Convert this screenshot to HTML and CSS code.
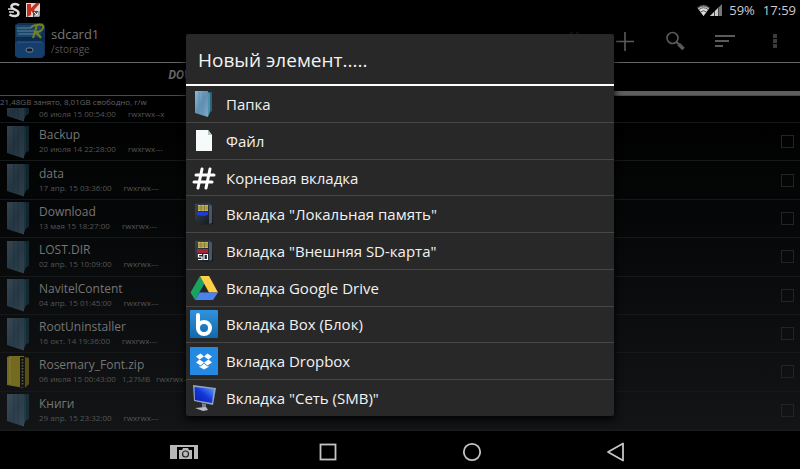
FILE: index.html
```html
<!DOCTYPE html>
<html lang="ru">
<head>
    <meta charset="UTF-8">
    <meta name="viewport" content="width=device-width, initial-scale=1.0">
    <title>sdcard1</title>
    <link rel="stylesheet" href="styles.css">
</head>
<body>
    <svg width="0" height="0" class="defs" aria-hidden="true">
        <defs>
            <linearGradient id="gFolder" x1="0" y1="0" x2="1" y2="1">
                <stop offset="0" stop-color="#8fb9d4"/>
                <stop offset="0.5" stop-color="#5f8fb2"/>
                <stop offset="1" stop-color="#7fa9c6"/>
            </linearGradient>
            <linearGradient id="gBlue" x1="0" y1="0" x2="0" y2="1">
                <stop offset="0" stop-color="#2f93dd"/>
                <stop offset="1" stop-color="#1268ac"/>
            </linearGradient>
            <linearGradient id="gScreen" x1="0" y1="1" x2="1" y2="0">
                <stop offset="0" stop-color="#0a1cb4"/>
                <stop offset="0.5" stop-color="#1237d8"/>
                <stop offset="1" stop-color="#63a0ff"/>
            </linearGradient>
            <linearGradient id="gCard" x1="0" y1="0" x2="1" y2="1">
                <stop offset="0" stop-color="#3c4a58"/>
                <stop offset="1" stop-color="#0d1218"/>
            </linearGradient>
            <symbol id="folder" viewBox="0 0 22 34">
                <path d="M14 1h8v25l-4 2z" fill="#2d6278"/>
                <path d="M0 1h17v32.500L0 28z" fill="url(#gFolder)"/>
                <path d="M7 1v28M11 1v29" stroke="#557f9e" stroke-width="1"/>
                <path d="M17 1l2 2v24l-2 5z" fill="#3f86a0"/>
            </symbol>
            <symbol id="zip" viewBox="0 0 22 34">
                <path d="M14 1l8 2v26l-4 4z" fill="#a08a20"/>
                <path d="M0 2l3-1h14v32L0 30z" fill="#d9c42c"/>
                <path d="M3 1v28" stroke="#f0e37a"/>
                <path d="M13 2h5v31l-5-1z" fill="#1c1a10"/>
                <path d="M15.500 4v27" stroke="#b8b490" stroke-width="1.500" stroke-dasharray="1.500 1.500"/>
            </symbol>
        </defs>
    </svg>

    <div class="statusbar">
        <svg class="status-icon" width="14" height="16" viewBox="0 0 14 16">
            <path d="M12 3.500C9 1 4 2 4.500 5s7 2.500 7 6-5.500 4-9 1.500" fill="none" stroke="#ddd" stroke-width="2.500"/>
            <path d="M1 7h6M7 10H2" stroke="#ddd" stroke-width="1.500"/>
        </svg>
        <svg class="status-icon" width="15" height="15" viewBox="0 0 15 15">
            <path d="M0 0h14v14H0z" fill="#ddd8d4"/>
            <path d="M1 1h4v4l5-5h4L8 7l3 3-3 1-3-3v4l-4 2z" fill="#c6301f"/>
            <path d="M7 8h7v6H7z" fill="#4a4a4a"/>
            <path d="M8 9l3 3M11.500 9.500V12H9M13 8v5H8" stroke="#eee" fill="none"/>
        </svg>
        <span class="spacer"></span>
        <svg width="26" height="13" viewBox="0 0 26 13">
            <path d="M0 3.500Q6.500-2 13 3.500L6.500 12z" fill="#555"/>
            <path d="M1 4.500Q6.500.500 12 4.500L6.500 12z" fill="#ddd"/>
            <path d="M2 5.500Q6.500 2 11 5.500M3.500 8Q6.500 5.500 9.500 8" stroke="#555" fill="none"/>
            <path d="M13 12L25 0v12z" fill="#777"/>
            <path d="M13 12L21 4v8z" fill="#ccc"/>
            <path d="M17.500 7v5M21.500 3v9" stroke="#444"/>
        </svg>
        <span class="battery">59%</span>
        <span class="clock">17:59</span>
    </div>

    <div class="appbar">
        <svg class="app-icon" width="31" height="36" viewBox="0 0 31 36">
            <path d="M1 2l3-2h25l2 3v29l-3 3H4l-3-3z" fill="#0f3156"/>
            <path d="M2 2h25v12H2z" fill="#174468"/>
            <path d="M3 5h14M3 8h17M4 11h20" stroke="#4a6d88" stroke-width="1.500"/>
            <path d="M1 14h29v5H1z" fill="#0c2b50"/>
            <path d="M1 19h29v14l-3 2H4l-3-2z" fill="#153e6a"/>
            <path d="M3 19h25" stroke="#2f6290"/>
            <rect x="12" y="25" width="7" height="4" rx="2" fill="#0a1a2c" stroke="#6e8494"/>
            <path d="M19 15l4-13c4-1 7 0 6 3s-4 4-7 4l5 6M17 5c1-3 4-3 7-3" fill="none" stroke="#79821d" stroke-width="2"/>
        </svg>
        <div class="title">
            <h1>sdcard1</h1>
            <p>/storage</p>
        </div>
        <div class="actions">
            <button aria-label="Выделить">
                <svg width="24" height="24" viewBox="0 0 24 24"><path d="M7 4h3M13 4h3" stroke="#222" stroke-width="1"/></svg>
            </button>
            <button aria-label="Добавить">
                <svg width="24" height="24" viewBox="0 0 24 24"><path d="M12 3v19M3 12.500h18" stroke="#5b5b5b" stroke-width="1.600"/></svg>
            </button>
            <button aria-label="Поиск">
                <svg width="24" height="24" viewBox="0 0 24 24">
                    <circle cx="9.500" cy="9" r="5.500" fill="none" stroke="#5b5b5b" stroke-width="1.600"/>
                    <path d="M13.500 13l2 2" stroke="#5b5b5b" stroke-width="2"/>
                    <path d="M15.500 15l5 5" stroke="#5b5b5b" stroke-width="3.600"/>
                </svg>
            </button>
            <button aria-label="Сортировка">
                <svg width="24" height="24" viewBox="0 0 24 24"><path d="M2 7h20M2 12h14M2 17h8" stroke="#5b5b5b" stroke-width="2"/></svg>
            </button>
            <button aria-label="Меню">
                <svg width="24" height="24" viewBox="0 0 24 24"><path d="M10 5h4v4h-4zM10 10h4v4h-4zM10 15h4v4h-4z" fill="#3c3c3c"/></svg>
            </button>
        </div>
    </div>

    <nav class="tabs">
        <a href="#download">DOWNLOAD</a>
        <a href="#sdcard1" class="active" aria-label="sdcard1"></a>
    </nav>

    <p class="usage">21,48GB занято, 8,01GB свободно, r/w</p>

    <ul class="files">
        <li class="cut">
            <svg class="file-icon"><use href="#folder"/></svg>
            <div class="info">
                <span class="meta"><span>06 июля 15 00:54:00</span><span>rwxrwx--x</span></span>
            </div>
        </li>
        <li>
            <svg class="file-icon"><use href="#folder"/></svg>
            <div class="info">
                <label class="name" for="f1">Backup</label>
                <span class="meta"><span>20 июля 14 22:28:00</span><span>rwxrwx---</span></span>
            </div>
            <input type="checkbox" id="f1">
        </li>
        <li>
            <svg class="file-icon"><use href="#folder"/></svg>
            <div class="info">
                <label class="name" for="f2">data</label>
                <span class="meta"><span>17 апр. 15 03:36:00</span><span>rwxrwx---</span></span>
            </div>
            <input type="checkbox" id="f2">
        </li>
        <li>
            <svg class="file-icon"><use href="#folder"/></svg>
            <div class="info">
                <label class="name" for="f3">Download</label>
                <span class="meta"><span>13 мая 15 18:27:00</span><span>rwxrwx---</span></span>
            </div>
            <input type="checkbox" id="f3">
        </li>
        <li>
            <svg class="file-icon"><use href="#folder"/></svg>
            <div class="info">
                <label class="name" for="f4">LOST.DIR</label>
                <span class="meta"><span>02 апр. 15 10:09:00</span><span>rwxrwx---</span></span>
            </div>
            <input type="checkbox" id="f4">
        </li>
        <li>
            <svg class="file-icon"><use href="#folder"/></svg>
            <div class="info">
                <label class="name" for="f5">NavitelContent</label>
                <span class="meta"><span>04 апр. 15 01:45:00</span><span>rwxrwx---</span></span>
            </div>
            <input type="checkbox" id="f5">
        </li>
        <li>
            <svg class="file-icon"><use href="#folder"/></svg>
            <div class="info">
                <label class="name" for="f6">RootUninstaller</label>
                <span class="meta"><span>16 окт. 14 19:36:00</span><span>rwxrwx---</span></span>
            </div>
            <input type="checkbox" id="f6">
        </li>
        <li>
            <svg class="file-icon zip"><use href="#zip"/></svg>
            <div class="info">
                <label class="name" for="f7">Rosemary_Font.zip</label>
                <span class="meta tight"><span>06 июля 15 00:43:00</span><span>1,27MB</span><span>rwxrwx---</span></span>
            </div>
            <input type="checkbox" id="f7">
        </li>
        <li>
            <svg class="file-icon"><use href="#folder"/></svg>
            <div class="info">
                <label class="name" for="f8">Книги</label>
                <span class="meta"><span>29 апр. 15 23:32:00</span><span>rwxrwx---</span></span>
            </div>
            <input type="checkbox" id="f8">
        </li>
    </ul>

    <div class="navbar">
        <button aria-label="Снимок экрана">
            <svg width="28" height="16" viewBox="0 0 28 16">
                <path d="M0 1h28v14h-4V3H7v12H0z" fill="#b8b8b8"/>
                <path d="M9 6h3l1-2h5l1 2h3v9H9z" fill="#b8b8b8"/>
                <circle cx="15.500" cy="10" r="3" fill="none" stroke="#222" stroke-width="1.200"/>
            </svg>
        </button>
        <button aria-label="Недавние">
            <svg width="20" height="20" viewBox="0 0 20 20"><rect x="2.500" y="2.500" width="15" height="15" fill="none" stroke="#c4c4c4" stroke-width="1.800"/></svg>
        </button>
        <button aria-label="Домой">
            <svg width="20" height="20" viewBox="0 0 20 20"><circle cx="10" cy="10" r="8.200" fill="none" stroke="#c4c4c4" stroke-width="1.800"/></svg>
        </button>
        <button aria-label="Назад">
            <svg width="20" height="20" viewBox="0 0 20 20"><path d="M17 1.500v17L2 10z" fill="none" stroke="#c4c4c4" stroke-width="1.800" stroke-linejoin="round"/></svg>
        </button>
    </div>

    <div class="overlay">
        <div class="dialog" role="dialog" aria-labelledby="dialogTitle">
            <h2 id="dialogTitle">Новый элемент.....</h2>
            <div class="options">
                <button>
                    <svg width="28" height="28" viewBox="0 0 28 28">
                        <path d="M16 2h6v19l-4 2z" fill="#2d6278"/>
                        <path d="M5 1h13v26L5 23z" fill="url(#gFolder)"/>
                        <path d="M9 2v22M13 2v23" stroke="#5f8fb2"/>
                        <path d="M18 2l2 2v18l-2 5z" fill="#4a92ad"/>
                    </svg>
                    Папка
                </button>
                <button>
                    <svg width="28" height="28" viewBox="0 0 28 28">
                        <path d="M6 3h12l4 5v16H6z" fill="#f5fafa"/>
                        <path d="M18 3v5h4z" fill="#b9c4c8"/>
                    </svg>
                    Файл
                </button>
                <button>
                    <svg width="28" height="28" viewBox="0 0 28 28">
                        <path d="M12 5l-4 19M20 5l-4 19M6 11h18M4 18h18" stroke="#fff" stroke-width="3" stroke-linecap="round"/>
                    </svg>
                    Корневая вкладка
                </button>
                <button>
                    <svg width="28" height="28" viewBox="0 0 28 28">
                        <path d="M5 4l15-1 3 3v18l-12 1-6-5z" fill="url(#gCard)"/>
                        <path d="M19 4l3 2v17l-3 1z" fill="#4b5661"/>
                        <path d="M8 5h10v6H8z" fill="#c9bb55"/>
                        <path d="M8 7h10M8 9h10M11 5v6M14.500 5v6" stroke="#807432" stroke-width=".8"/>
                        <path d="M7 12h11v3l-4 1-7-1z" fill="#1f3be0"/>
                    </svg>
                    Вкладка "Локальная память"
                </button>
                <button>
                    <svg width="28" height="28" viewBox="0 0 28 28">
                        <path d="M5 4l15-1 3 3v18l-12 1-6-5z" fill="url(#gCard)"/>
                        <path d="M19 4l3 2v17l-3 1z" fill="#4b5661"/>
                        <path d="M8 5h10v6H8z" fill="#c9bb55"/>
                        <path d="M8 7h10M8 9h10M11 5v6M14.500 5v6" stroke="#807432" stroke-width=".8"/>
                        <path d="M7 12h11v4H7z" fill="#a32634"/>
                        <path d="M12 17.500H8.500v2.500H12v2.500H8M14 17.500h3.500v5H14z" fill="none" stroke="#fff" stroke-width="1.200"/>
                    </svg>
                    Вкладка "Внешняя SD-карта"
                </button>
                <button>
                    <svg width="28" height="28" viewBox="0 0 28 28">
                        <path d="M10 2L0.500 18.500l4.500 7.500 9.500-16.500z" fill="#1aa260"/>
                        <path d="M10 2h9l9 16.500h-9z" fill="#ffcf48"/>
                        <path d="M9.500 18.500H28L23 26H5z" fill="#4a83ee"/>
                    </svg>
                    Вкладка Google Drive
                </button>
                <button>
                    <svg width="28" height="28" viewBox="0 0 28 28">
                        <rect width="28" height="28" rx="1" fill="url(#gBlue)"/>
                        <path d="M8 5v13" stroke="#fff" stroke-width="4" stroke-linecap="round"/>
                        <circle cx="14" cy="18" r="6" fill="none" stroke="#fff" stroke-width="4"/>
                    </svg>
                    Вкладка Box (Блок)
                </button>
                <button>
                    <svg width="28" height="28" viewBox="0 0 28 28">
                        <rect width="28" height="28" fill="#2389e2"/>
                        <path d="M10.500 6.500l3.500 3-4.500 3L6 9.500zM17.500 6.500l-3.500 3 4.500 3L22 9.500zM9.500 12.500l4.500 3-3.500 3-4.500-3zM18.500 12.500l-4.500 3 3.500 3 4.500-3zM14 16.500l3.500 3 1-.7v1.200L14 22.500l-4.500-2.500v-1.200l1 .7z" fill="#fff"/>
                    </svg>
                    Вкладка Dropbox
                </button>
                <button>
                    <svg width="28" height="28" viewBox="0 0 28 28">
                        <path d="M3 1l23 3-3 17-19-4z" fill="#93a3bd"/>
                        <path d="M4.500 3L24 5l-2 14-17-3z" fill="url(#gScreen)"/>
                        <path d="M12 19l4 1v4h-4z" fill="#76808c"/>
                        <path d="M5 24l11-1 2 3-5 1z" fill="#b6bfc9"/>
                    </svg>
                    Вкладка "Сеть (SMB)"
                </button>
            </div>
        </div>
    </div>
</body>
</html>
```
FILE: styles.css
```css
* {
    box-sizing: border-box;
}
body {
    margin: 0;
    height: 100vh;
    display: flex;
    flex-direction: column;
    overflow: hidden;
    background-color: #000;
    color: #666;
    font-family: "Open Sans", "Noto Sans", sans-serif;
}
h1, h2, p, ul {
    margin: 0;
    padding: 0;
    font-weight: normal;
}
button {
    border: none;
    padding: 0;
    background: none;
    color: inherit;
    font-family: inherit;
    cursor: pointer;
}
svg {
    flex-shrink: 0;
    display: block;
}
.defs {
    position: absolute;
}
.statusbar {
    height: 20px;
    display: flex;
    align-items: center;
    padding: 0 4px 0 7px;
    color: #ccc;
    font-size: 13px;
}
.status-icon {
    margin-right: 5px;
}
.spacer {
    flex: 1;
}
.battery {
    margin: 0 8px 0 6px;
}
.appbar {
    height: 43px;
    display: flex;
    align-items: center;
    padding-left: 14px;
    border-bottom: 1px solid #666;
}
.title {
    margin-left: 6px;
    flex: 1;
}
.title h1 {
    font-size: 13px;
    line-height: 16px;
    color: #777;
}
.title p {
    font-size: 10px;
    line-height: 14px;
    color: #555;
}
.actions {
    display: flex;
}
.actions button {
    width: 50px;
    display: flex;
    justify-content: center;
}
.tabs {
    display: flex;
    height: 33px;
    border-bottom: 1px solid #4a4a4a;
}
.tabs a {
    flex: 1;
    padding-top: 4px;
    text-align: center;
    text-decoration: none;
    font: italic bold 12px/16px Roboto, sans-serif;
    color: #666;
}
.tabs .active {
    border-bottom: 4px solid #5e5e5e;
}
.usage {
    height: 12px;
    font-size: 8px;
    line-height: 12px;
    color: #626262;
}
.files {
    flex: 1;
    display: flex;
    flex-direction: column;
    list-style: none;
    overflow: hidden;
    background: linear-gradient(#000, #080a0b 50%, #121416);
}
.files li {
    flex: 1;
    display: flex;
    align-items: center;
    gap: 10px;
    padding: 0 6px 0 7px;
    overflow: hidden;
    border-bottom: 1px solid #16191a;
}
.files .cut {
    flex: 0 0 15px;
    align-items: flex-end;
}
.file-icon {
    width: 22px;
    height: 34px;
    opacity: 0.35;
}
.file-icon.zip {
    opacity: 0.5;
}
.info {
    flex: 1;
    display: flex;
    flex-direction: column;
    padding-bottom: 2px;
}
.name {
    font-size: 12px;
    line-height: 17px;
    color: #757575;
}
.meta {
    display: flex;
    gap: 12px;
    font-size: 8px;
    line-height: 12px;
    color: #555;
}
.meta.tight {
    gap: 6px;
}
.files input {
    appearance: none;
    width: 13px;
    height: 13px;
    margin: 0;
    border: 1px solid #222425;
}
.navbar {
    height: 39px;
    display: flex;
    justify-content: center;
    align-items: center;
    padding-top: 4px;
    border-top: 1px solid #17191a;
    background-color: #000;
}
.navbar button {
    width: 18%;
    display: flex;
    justify-content: center;
}
.overlay {
    position: absolute;
    top: 20px;
    right: 0;
    bottom: 39px;
    left: 0;
    display: flex;
    justify-content: center;
    align-items: center;
    padding: 0 186px;
}
.dialog {
    flex: 1;
    height: 93%;
    display: flex;
    flex-direction: column;
    border-radius: 2px;
    background-color: #282828;
    box-shadow: 0 3px 8px #000;
    color: #f2f2f2;
}
.dialog h2 {
    padding: 13px 12px 11px;
    font-size: 19px;
    line-height: 26px;
    border-bottom: 2px solid #fff;
}
.options {
    flex: 1;
    display: flex;
    flex-direction: column;
}
.options button {
    flex: 1;
    display: flex;
    align-items: center;
    gap: 8px;
    padding: 0 4px;
    font-size: 15px;
    font-weight: 500;
    border-bottom: 1px solid #464646;
}
.options button:last-child {
    border-bottom: none;
}
```
